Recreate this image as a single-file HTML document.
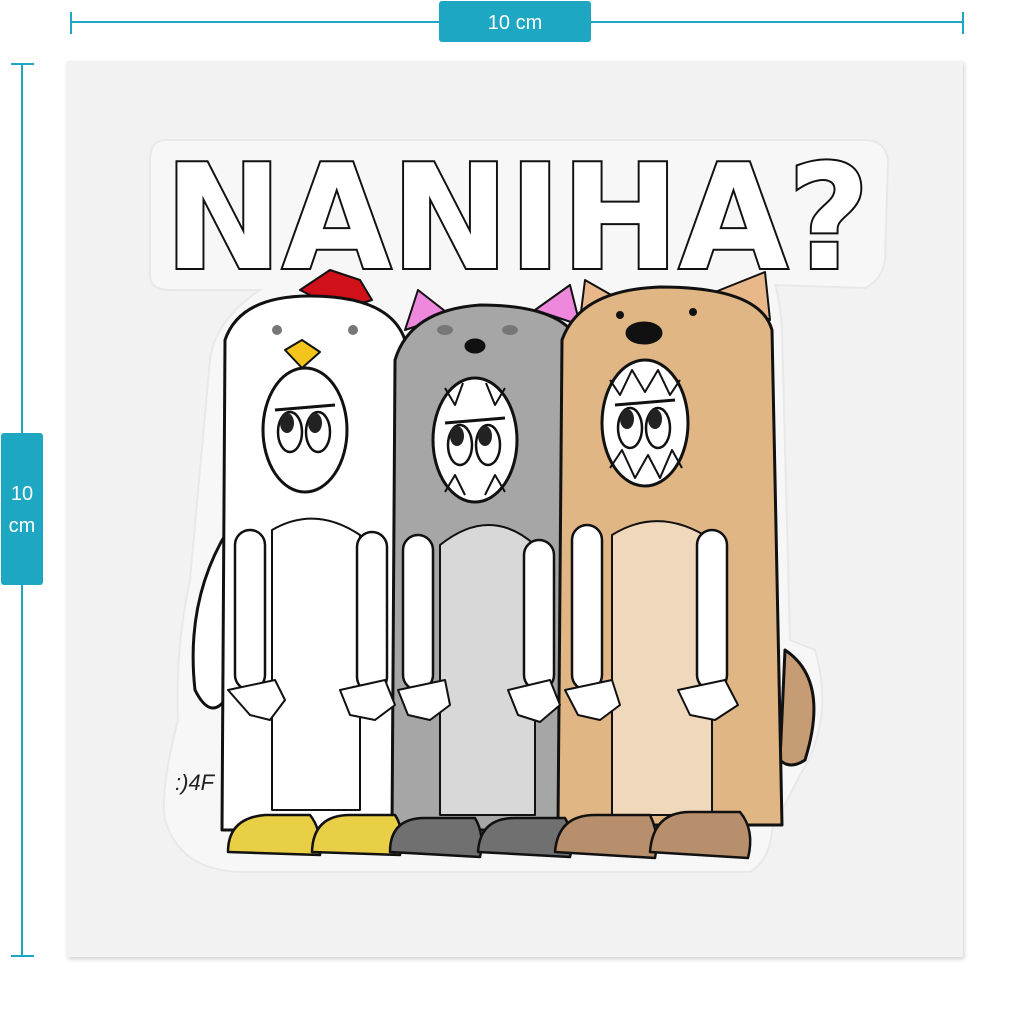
<!DOCTYPE html>
<html><head><meta charset="utf-8"><style>
html,body{margin:0;padding:0;background:#fff;width:1024px;height:1024px;overflow:hidden;font-family:"Liberation Sans",sans-serif}
</style></head><body>
<svg width="1024" height="1024" viewBox="0 0 1024 1024" xmlns="http://www.w3.org/2000/svg">
<defs><filter id="sh" x="-5%" y="-5%" width="110%" height="110%"><feDropShadow dx="1" dy="2" stdDeviation="2" flood-color="#000" flood-opacity="0.2"/></filter></defs>
<g stroke="#1ea7c2" stroke-width="2">
<line x1="71" y1="22" x2="963" y2="22"/><line x1="71" y1="12" x2="71" y2="34"/><line x1="963" y1="12" x2="963" y2="34"/>
<line x1="22" y1="64" x2="22" y2="956"/><line x1="11" y1="64" x2="34" y2="64"/><line x1="11" y1="956" x2="34" y2="956"/>
</g>
<rect x="439" y="1" width="152" height="41" rx="3" fill="#1ea7c2"/>
<text x="515" y="29" font-size="20" fill="#fff" text-anchor="middle" font-family="Liberation Sans">10 cm</text>
<rect x="1" y="433" width="42" height="152" rx="3" fill="#1ea7c2"/>
<text x="22" y="500" font-size="20" fill="#fff" text-anchor="middle">10</text>
<text x="22" y="532" font-size="20" fill="#fff" text-anchor="middle">cm</text>
<rect x="67" y="61" width="896" height="896" fill="#f2f2f2" filter="url(#sh)"/>
<path d="M165 140 Q150 140 150 160 L150 275 Q150 290 170 290 L260 290 Q215 320 210 360 L190 580 Q175 650 178 720 Q160 790 165 820 Q180 870 240 872 L750 872 Q770 860 772 830 L800 775 Q835 720 815 650 L790 640 L782 330 Q780 300 775 285 L865 288 Q882 280 885 260 L888 160 Q885 140 865 140 Z" fill="#f7f7f7" stroke="#e8e8e8" stroke-width="2"/>
<text x="517" y="268" font-size="145" font-family="DejaVu Sans" font-weight="bold" fill="#fff" stroke="#111" stroke-width="4" text-anchor="middle" textLength="705" lengthAdjust="spacingAndGlyphs" paint-order="stroke">NANIHA?</text>
<g stroke="#111" stroke-width="3" stroke-linejoin="round">
<path d="M228 530 Q185 600 195 690 Q210 720 225 700 Z" fill="#fff"/>
<path d="M300 290 L330 270 L360 280 L372 300 L340 310 Z" fill="#d1111a" stroke-width="2"/>
<path d="M225 340 Q240 296 310 296 Q390 296 405 340 L405 830 L222 830 Z" fill="#fff"/>
<path d="M285 350 L302 340 L320 352 L302 368 Z" fill="#f2c41c" stroke-width="2"/>
<circle cx="277" cy="330" r="5" fill="#777" stroke="none"/><circle cx="353" cy="330" r="5" fill="#777" stroke="none"/>
<path d="M405 330 L418 290 L450 315 Z" fill="#ee88dd" stroke-width="2"/>
<path d="M535 310 L570 285 L580 325 Z" fill="#ee88dd" stroke-width="2"/>
<path d="M395 360 Q410 310 480 305 Q560 305 578 340 L580 830 L392 830 Z" fill="#a6a6a6"/>
<ellipse cx="475" cy="346" rx="9" ry="6" fill="#111"/>
<ellipse cx="445" cy="330" rx="8" ry="5" fill="#777" stroke="none"/><ellipse cx="510" cy="330" rx="8" ry="5" fill="#777" stroke="none"/>
<path d="M785 650 Q830 680 805 760 Q790 770 780 760 Z" fill="#c59c74"/>
<path d="M580 320 L585 280 L620 300 Z" fill="#e8b88a" stroke-width="2"/>
<path d="M715 292 L765 272 L770 320 Z" fill="#e8b88a" stroke-width="2"/>
<path d="M562 340 Q580 290 660 287 Q760 287 772 330 L782 825 L558 825 Z" fill="#e1b685"/>
<ellipse cx="644" cy="333" rx="17" ry="10" fill="#111"/>
<circle cx="620" cy="315" r="2.5" fill="#111"/><circle cx="693" cy="312" r="2.5" fill="#111"/>
<path d="M272 530 Q315 505 360 535 L360 810 L272 810 Z" fill="#fff" stroke-width="2"/>
<path d="M440 545 Q490 505 535 545 L535 815 L440 815 Z" fill="#d8d8d8" stroke-width="2"/>
<path d="M612 535 Q660 505 712 540 L712 815 L612 815 Z" fill="#f0d8bc" stroke-width="2"/>
<ellipse cx="305" cy="430" rx="42" ry="62" fill="#fff"/>
<ellipse cx="475" cy="440" rx="42" ry="62" fill="#fff"/>
<ellipse cx="645" cy="423" rx="43" ry="63" fill="#fff"/>
<path d="M445 388 L455 405 L463 383 M486 383 L495 405 L505 388 M445 492 L455 475 L465 495 M485 495 L495 475 L505 492" fill="none" stroke-width="2"/>
<path d="M610 380 L620 395 L632 370 L645 392 L658 370 L670 395 L680 380 M610 468 L622 450 L635 478 L648 455 L660 478 L672 450 L682 468" fill="none" stroke-width="2"/>
<g stroke-width="2.5" fill="#fff">
<ellipse cx="290" cy="432" rx="12" ry="20"/><ellipse cx="318" cy="432" rx="12" ry="20"/>
<ellipse cx="460" cy="445" rx="12" ry="20"/><ellipse cx="488" cy="445" rx="12" ry="20"/>
<ellipse cx="630" cy="428" rx="12" ry="20"/><ellipse cx="658" cy="428" rx="12" ry="20"/>
</g>
<g stroke="none" fill="#222">
<ellipse cx="287" cy="423" rx="7" ry="10"/><ellipse cx="315" cy="423" rx="7" ry="10"/>
<ellipse cx="457" cy="436" rx="7" ry="10"/><ellipse cx="485" cy="436" rx="7" ry="10"/>
<ellipse cx="627" cy="419" rx="7" ry="10"/><ellipse cx="655" cy="419" rx="7" ry="10"/>
</g>
<path d="M275 410 L335 405 M445 423 L505 418 M615 405 L675 400" stroke-width="3"/>
<g fill="#fff" stroke-width="2.5">
<rect x="235" y="530" width="30" height="160" rx="15"/><rect x="357" y="532" width="30" height="160" rx="15"/>
<rect x="403" y="535" width="30" height="155" rx="15"/><rect x="524" y="540" width="30" height="150" rx="15"/>
<rect x="572" y="525" width="30" height="165" rx="15"/><rect x="697" y="530" width="30" height="160" rx="15"/>
</g>
<g fill="#fff" stroke-width="2">
<path d="M228 690 L275 680 L285 700 L270 720 L250 715 Z"/><path d="M340 690 L385 680 L395 705 L375 720 L350 715 Z"/>
<path d="M398 690 L445 680 L450 705 L430 720 L408 715 Z"/><path d="M508 690 L550 680 L560 705 L540 722 L518 715 Z"/>
<path d="M565 690 L612 680 L620 705 L600 720 L578 715 Z"/><path d="M678 690 L725 680 L738 705 L715 720 L690 715 Z"/>
</g>
<g stroke-width="2.5">
<path d="M228 852 Q228 818 265 815 L310 815 Q322 830 320 855 Z" fill="#e8cf45"/>
<path d="M312 852 Q313 815 350 815 L395 815 Q405 830 400 855 Z" fill="#e8cf45"/>
<path d="M390 852 Q390 818 425 818 L475 818 Q485 835 480 857 Z" fill="#707070"/>
<path d="M478 852 Q480 818 515 818 L565 818 Q575 835 570 857 Z" fill="#707070"/>
<path d="M555 852 Q558 815 595 815 L650 815 Q660 835 655 858 Z" fill="#b88f6c"/>
<path d="M650 852 Q653 812 690 812 L740 812 Q755 830 748 858 Z" fill="#b88f6c"/>
</g>
</g>
<text x="175" y="790" font-size="22" fill="#222" font-style="italic">:)4F</text>
</svg>
</body></html>
